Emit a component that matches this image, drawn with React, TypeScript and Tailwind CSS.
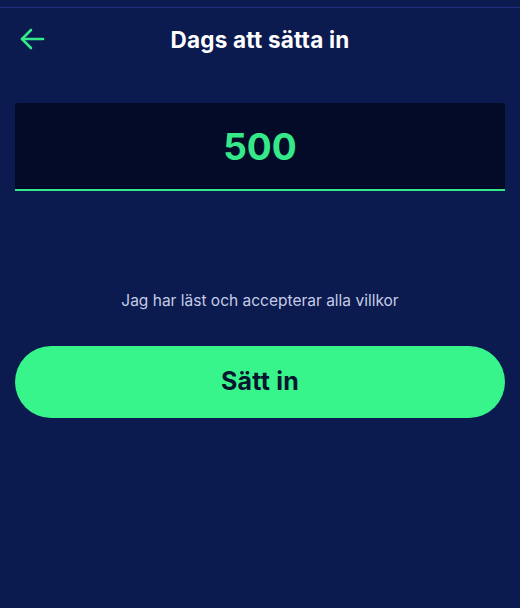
import React from 'react';

const App: React.FC = () => {
  return (
    <div
      className="w-[520px] h-[608px] bg-[#0b1a4f] flex flex-col"
      style={{ fontFamily: 'Inter, "Noto Sans", sans-serif' }}
    >
      <div className="h-[7px]" />
      <div className="h-px bg-[#1d2f7e]" />

      {/* header */}
      <div className="relative h-[62px] flex items-center justify-center">
        <button className="absolute left-[19px] top-[19px] text-[#35e98a]">
          <svg width="26" height="24" viewBox="0 0 26 24" fill="none" stroke="currentColor" strokeWidth="2.6" strokeLinecap="round" strokeLinejoin="round">
            <path d="M24 12H3" />
            <path d="M12 3L3 12l9 9" />
          </svg>
        </button>
        <h1 className="text-white text-[22.5px] font-bold tracking-[0.2px] mt-[1px]">Dags att sätta in</h1>
      </div>

      {/* amount */}
      <div className="mx-[15px] mt-[33px] h-[88px] bg-[#040b28] rounded-t-[3px] border-b-2 border-[#35e98a] flex items-center justify-center">
        <span className="text-[#35e98a] text-[37px] font-bold tracking-[0px] leading-none">500</span>
      </div>

      <p className="mt-[100px] text-center text-[15.5px] text-[#c5cde6] leading-5">
        Jag har läst och accepterar alla villkor
      </p>

      <button className="mx-[15px] mt-[35px] h-[72px] rounded-full bg-[#37f58b] flex items-center justify-center">
        <span className="text-[#08152f] text-[25px] font-bold tracking-[0.2px]">Sätt in</span>
      </button>
    </div>
  );
};

export default App;
